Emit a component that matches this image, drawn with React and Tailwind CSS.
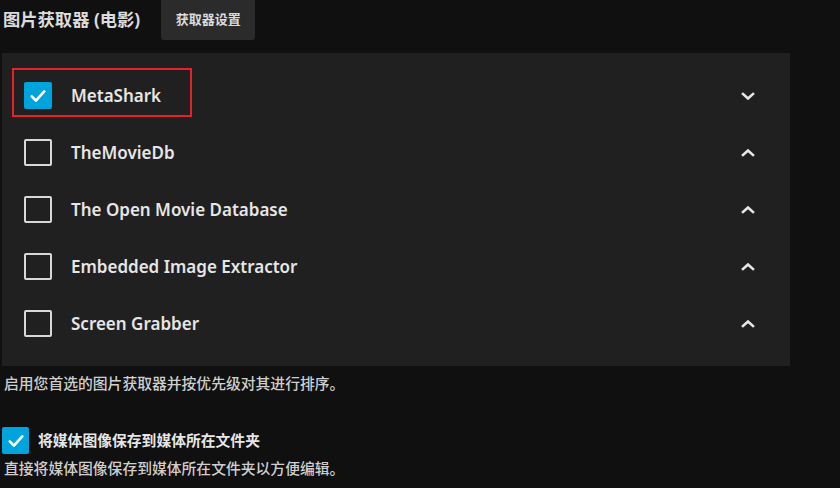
import React from 'react';

const fetchers = [
  { name: 'MetaShark', checked: true, dir: 'down' },
  { name: 'TheMovieDb', checked: false, dir: 'up' },
  { name: 'The Open Movie Database', checked: false, dir: 'up' },
  { name: 'Embedded Image Extractor', checked: false, dir: 'up' },
  { name: 'Screen Grabber', checked: false, dir: 'up' },
];

function Check() {
  return (
    <svg viewBox="0 0 24 24" className="w-[20px] h-[20px]" fill="none" stroke="#fff" strokeWidth="3.2" strokeLinecap="round" strokeLinejoin="round">
      <polyline points="4.5 12.5 9.5 17.5 19.5 6.5" />
    </svg>
  );
}

function Box({ checked }) {
  return checked ? (
    <div className="w-[28px] h-[27px] rounded-[2px] bg-[#00a4dc] flex items-center justify-center flex-shrink-0">
      <Check />
    </div>
  ) : (
    <div className="w-[28px] h-[27px] rounded-[2px] border-2 border-[#d8d8d8] flex-shrink-0" />
  );
}

function Chevron({ dir }) {
  return (
    <svg viewBox="0 0 14 8" className="w-[14px] h-[8px]" fill="none" stroke="#e6e6e6" strokeWidth="2.6" strokeLinecap="square">
      {dir === 'down' ? <polyline points="2 2 7 6.5 12 2" /> : <polyline points="2 6 7 1.5 12 6" />}
    </svg>
  );
}

export default function App() {
  return (
    <div className="w-[840px] h-[488px] bg-[#101010] text-[#e0e0e0] overflow-hidden" style={{ fontFamily: '"Noto Sans", "Noto Sans CJK SC", sans-serif' }}>
      <div className="flex items-center h-[40px]">
        <h2 className="pl-[3px] text-[17.3px] font-bold text-[#dcdcdc] leading-none">图片获取器 (电影)</h2>
        <button className="ml-[21px] w-[94px] h-[40px] bg-[#2b2b2b] rounded-b-[3px] text-[13px] font-bold text-[#dcdcdc]">获取器设置</button>
      </div>

      <div className="relative mt-[13px] ml-[2px] w-[788px] bg-[#202020] py-[14px]">
        {fetchers.map(f => (
          <div key={f.name} className="h-[57px] flex items-center pl-[22px] pr-[35px]">
            <Box checked={f.checked} />
            <span className="ml-[19px] text-[17px] font-semibold text-[#e6e6e6] flex-1">{f.name}</span>
            <Chevron dir={f.dir} />
          </div>
        ))}
        <div className="absolute left-[10px] top-[15px] w-[180px] h-[49px] border-2 border-[#e8202a]" />
      </div>

      <p className="mt-[7px] pl-[4px] text-[14.8px] font-medium text-[#cfcfcf] leading-[20px]">启用您首选的图片获取器并按优先级对其进行排序。</p>

      <div className="mt-[34px] flex items-center gap-[9px] pl-[2px]">
        <div className="w-[27px] h-[27px] rounded-[2px] bg-[#00a4dc] flex items-center justify-center">
          <Check />
        </div>
        <span className="text-[14.8px] font-bold text-[#e6e6e6]">将媒体图像保存到媒体所在文件夹</span>
      </div>
      <p className="mt-[4px] pl-[4px] text-[14.8px] font-medium text-[#cfcfcf] leading-[20px]">直接将媒体图像保存到媒体所在文件夹以方便编辑。</p>
    </div>
  );
}
